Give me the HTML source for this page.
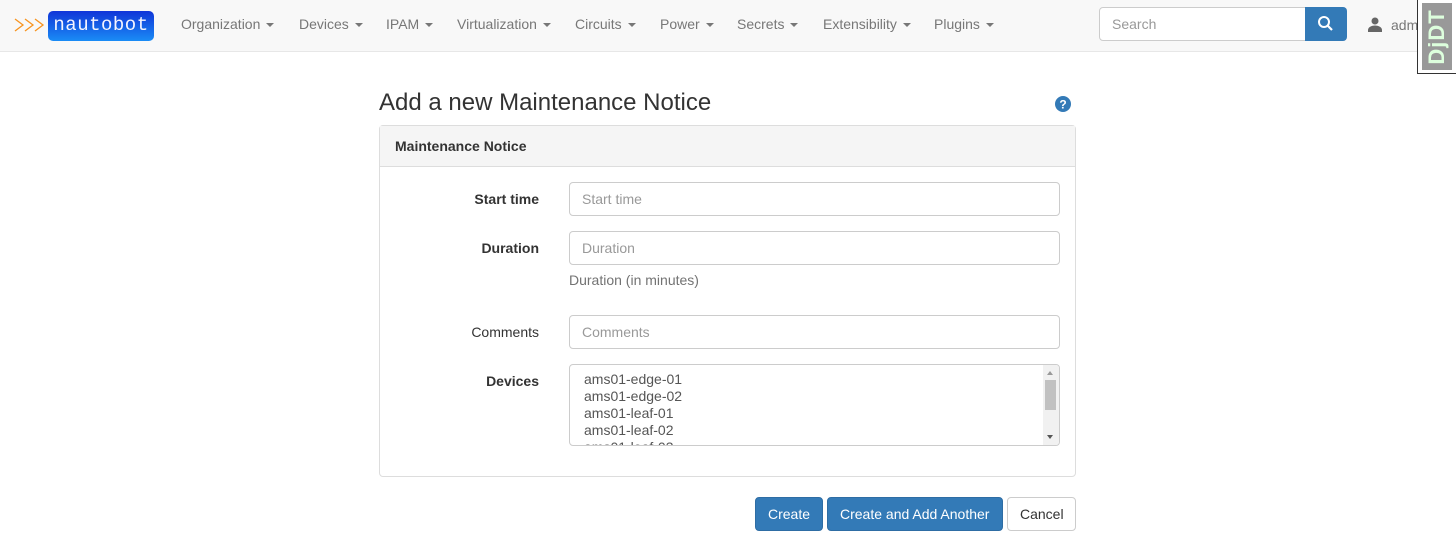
<!DOCTYPE html>
<html><head><style>
*{box-sizing:border-box}
body{margin:0;font-family:"Liberation Sans",sans-serif;font-size:14px;color:#333;background:#fff;width:1456px;height:560px;overflow:hidden;position:relative}
.nav{position:absolute;left:0;top:0;width:1456px;height:52px;background:#f8f8f8;border-bottom:1px solid #e7e7e7}
.a{position:absolute}
.ni{position:absolute;top:16px;color:#777;font-size:14px;white-space:nowrap}
.ni:after{content:"";display:inline-block;margin-left:6px;vertical-align:middle;border-top:4px solid #777;border-left:4px solid transparent;border-right:4px solid transparent}
.lbl{position:absolute;right:917px;font-weight:bold;text-align:right}
.inp{position:absolute;left:569px;width:491px;height:34px;border:1px solid #ccc;border-radius:4px;padding:8px 12px;color:#999}
.btn{position:absolute;top:497px;height:34px;border-radius:4px;padding:8px 12px;white-space:nowrap}
.bp{background:#337ab7;border:1px solid #2e6da4;color:#fff}
</style></head><body>
<div class="nav">
<svg class="a" style="left:14px;top:17px" width="32" height="16"><path d="M1 2l8 6-8 6M11 2l8 6-8 6M21 2l8 6-8 6" fill="none" stroke="#f7931e" stroke-width="1.3"/></svg>
<div class="a" style="left:48px;top:11px;width:106px;height:30px;border-radius:5px;background:linear-gradient(#1035d8,#1a8cf5);color:#f4f4ff;font-family:'Liberation Mono',monospace;font-size:19px;line-height:28px;text-align:center;letter-spacing:0.5px">nautobot</div>
<span class="ni" style="left:181px">Organization</span>
<span class="ni" style="left:299px">Devices</span>
<span class="ni" style="left:386px">IPAM</span>
<span class="ni" style="left:457px">Virtualization</span>
<span class="ni" style="left:575px">Circuits</span>
<span class="ni" style="left:660px">Power</span>
<span class="ni" style="left:737px">Secrets</span>
<span class="ni" style="left:823px">Extensibility</span>
<span class="ni" style="left:934px">Plugins</span>
<div class="a" style="left:1099px;top:7px;width:207px;height:34px;border:1px solid #ccc;border-radius:4px 0 0 4px;background:#fff;padding:8px 12px;color:#999">Search</div>
<div class="a" style="left:1305px;top:7px;width:42px;height:34px;background:#337ab7;border-radius:0 4px 4px 0">
<svg width="42" height="34"><circle cx="19" cy="15" r="5" fill="none" stroke="#fff" stroke-width="2"/><line x1="23" y1="19" x2="27" y2="23" stroke="#fff" stroke-width="2.2"/></svg></div>
<svg class="a" style="left:1366px;top:16px" width="18" height="18"><circle cx="9" cy="5" r="3.5" fill="#666"/><path d="M2 16v-2c0-3 4-4.5 7-4.5s7 1.5 7 4.5v2z" fill="#666"/></svg>
<span class="a" style="left:1391px;top:17px;color:#777">admin</span>
</div>
<div class="a" style="left:1417px;top:0;width:39px;height:74px;border:1px solid #333;border-right:none;border-top:none;background:#fff;padding:3px 4px 0 4px">
<div style="width:30px;height:67px;background:#999;position:relative"><div style="position:absolute;left:-19px;top:21px;width:68px;transform:rotate(-90deg);text-align:center;color:#dfd;font-weight:bold;font-size:22px;line-height:26px;letter-spacing:1px">DjDT</div></div></div>
<div class="a" style="left:379px;top:89px;font-size:24px;color:#333">Add a new Maintenance Notice</div>
<svg class="a" style="left:1055px;top:96px" width="16" height="16"><circle cx="8" cy="8" r="8" fill="#337ab7"/><text x="8" y="12.5" font-size="12" font-weight="bold" fill="#fff" text-anchor="middle" font-family="Liberation Sans">?</text></svg>
<div class="a" style="left:379px;top:125px;width:697px;height:352px;border:1px solid #ddd;border-radius:4px">
<div style="height:41px;background:#f5f5f5;border-bottom:1px solid #ddd;padding:12px 15px;font-weight:bold">Maintenance Notice</div></div>
<div class="lbl" style="top:191px">Start time</div>
<div class="inp" style="top:182px">Start time</div>
<div class="lbl" style="top:240px">Duration</div>
<div class="inp" style="top:231px">Duration</div>
<div class="a" style="left:569px;top:272px;color:#737373">Duration (in minutes)</div>
<div class="lbl" style="top:324px;font-weight:normal">Comments</div>
<div class="inp" style="top:315px">Comments</div>
<div class="lbl" style="top:373px">Devices</div>
<div class="a" style="left:569px;top:364px;width:491px;height:82px;border:1px solid #ccc;border-radius:4px;overflow:hidden;padding:6px 14px;line-height:17px;color:#555">ams01-edge-01<br>ams01-edge-02<br>ams01-leaf-01<br>ams01-leaf-02<br>ams01-leaf-03
<div style="position:absolute;right:0;top:0;width:16px;height:80px;background:#f1f1f1"><div style="position:absolute;left:2px;top:15px;width:11px;height:30px;background:#c1c1c1"></div>
<div style="position:absolute;left:4px;top:6px;border-bottom:4px solid #999;border-left:3.5px solid transparent;border-right:3.5px solid transparent"></div>
<div style="position:absolute;left:4px;top:70px;border-top:4px solid #555;border-left:3.5px solid transparent;border-right:3.5px solid transparent"></div></div></div>
<div class="btn bp" style="left:755px;width:68px">Create</div>
<div class="btn bp" style="left:827px;width:176px">Create and Add Another</div>
<div class="btn" style="left:1007px;width:69px;border:1px solid #ccc;color:#333">Cancel</div>
</body></html>
